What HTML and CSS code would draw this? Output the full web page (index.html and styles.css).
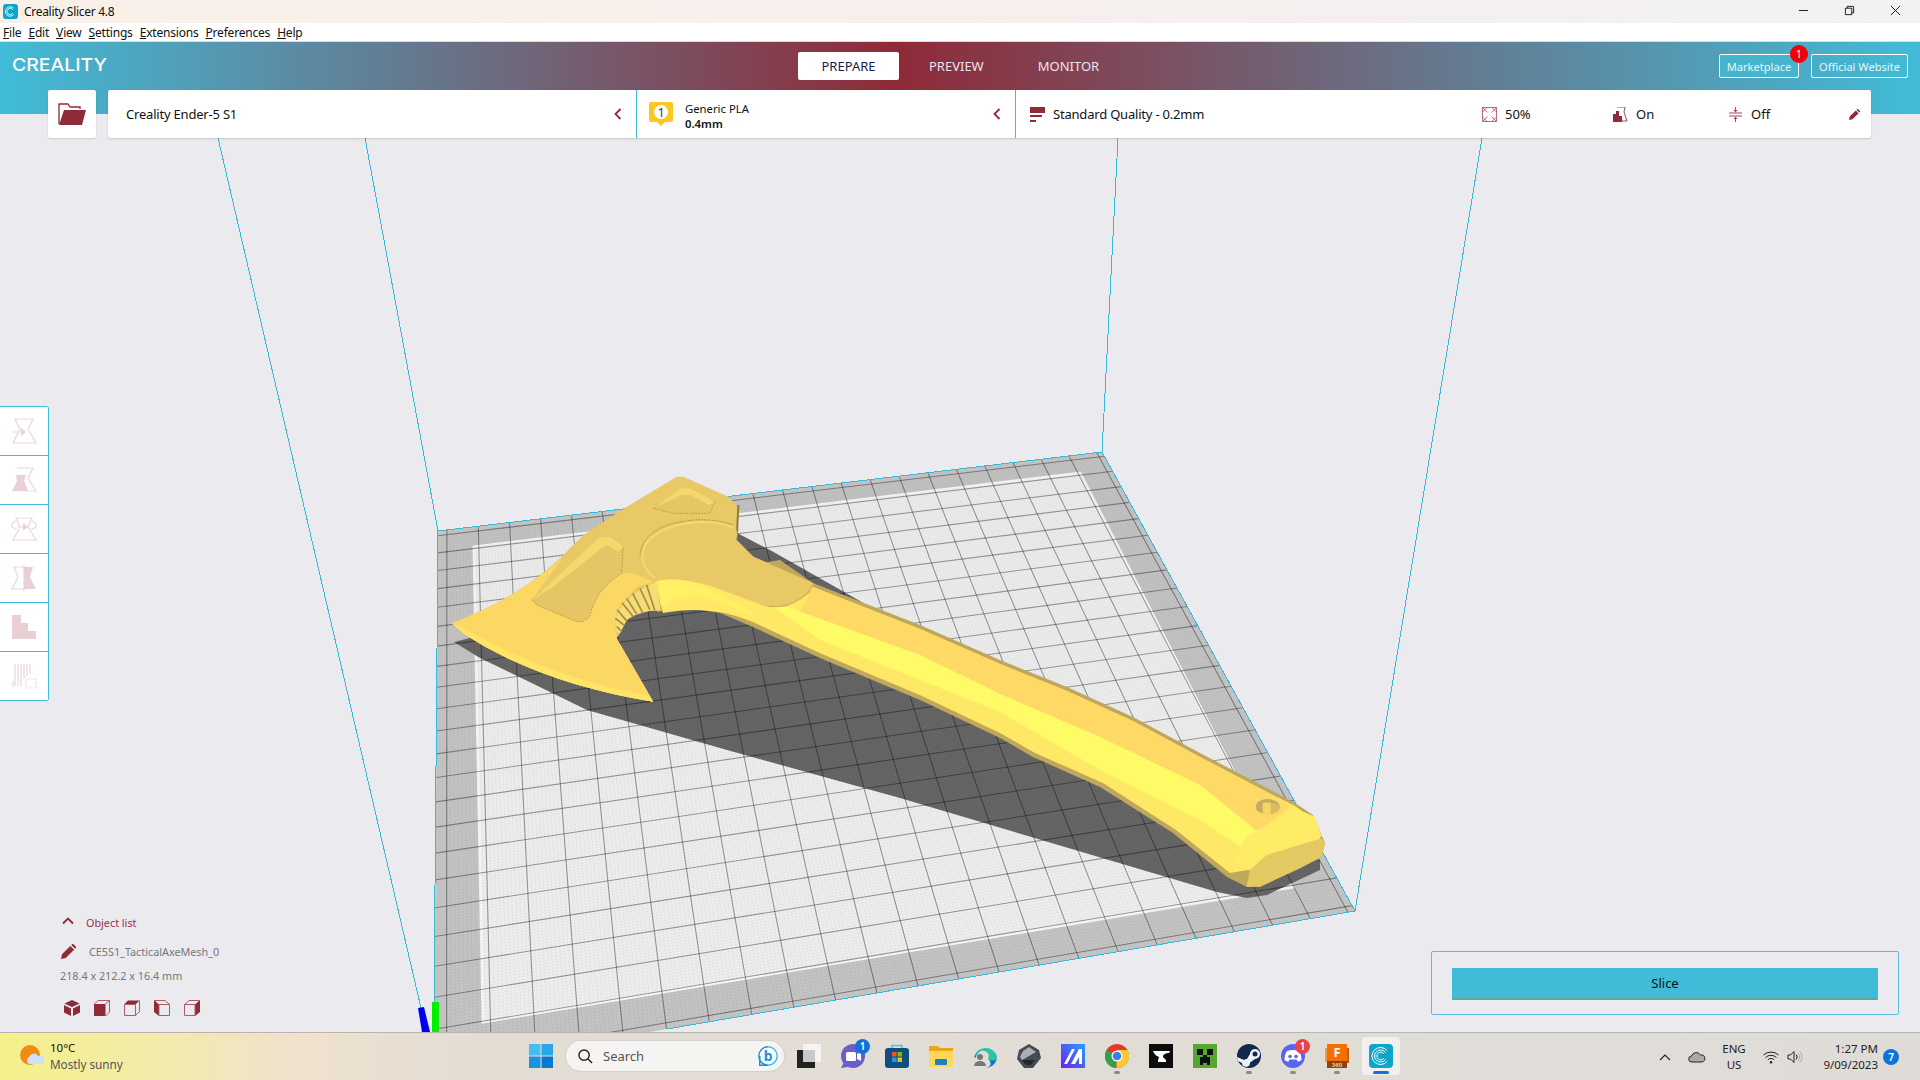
FILE: index.html
```html
<!DOCTYPE html>
<html lang="en">
<head>
<meta charset="utf-8">
<title>Creality Slicer 4.8</title>
<link rel="stylesheet" href="styles.css">
</head>
<body>
<div class="app">
  <div class="titlebar">
    <svg class="app-icon" viewBox="0 0 24 24"><rect width="24" height="24" rx="5" fill="#0fa5c8"/><path d="M17 7a7.500 7.500 0 1 0 0 10" fill="none" stroke="#fff" stroke-width="1.400"/><path d="M15.500 9a5 5 0 1 0 0 6" fill="none" stroke="#fff" stroke-width="1.400"/></svg>
    <span class="title-text">Creality Slicer 4.8</span>
    <div class="win-controls">
      <svg viewBox="0 0 12 12" class="win-btn"><path d="M1 6h10" stroke="#111" fill="none"/></svg>
      <svg viewBox="0 0 12 12" class="win-btn"><path d="M1.500 3.500h7v7h-7zM3.500 3.500v-2h6.500a.5.5 0 0 1 .5.5v6.500h-2" stroke="#111" fill="none"/></svg>
      <svg viewBox="0 0 12 12" class="win-btn"><path d="M1 1l10 10M11 1L1 11" stroke="#111" fill="none"/></svg>
    </div>
  </div>
  <div class="menubar">
    <span><u>F</u>ile</span><span><u>E</u>dit</span><span><u>V</u>iew</span><span><u>S</u>ettings</span><span><u>E</u>xtensions</span><span><u>P</u>references</span><span><u>H</u>elp</span>
  </div>
  <header class="header">
    <div class="logo">CREALITY</div>
    <nav class="tabs">
      <span class="tab tab-active">PREPARE</span>
      <span class="tab">PREVIEW</span>
      <span class="tab">MONITOR</span>
    </nav>
    <div class="links">
      <span class="link link-market">Marketplace<span class="link-badge">1</span></span>
      <span class="link link-site">Official Website</span>
    </div>
  </header>
  <main class="viewport">
    <svg class="scene" viewBox="0 114 1920 918" width="1920" height="918">
      <polygon points="438,531 1102,452 1355,911 434,1069" fill="#c4c4c4"/>
      <polygon points="474,547 1080,473 1293,887 483,1022" fill="#eeeeee" stroke="#f6f6f6" stroke-width="3"/>
      <polygon points="454,642 480,658 587,710 727,750 900,798 1217,892 1247,898 1267,895 1320,870 1320,860 1250,830 853,597 770,550 737,533 620,600" fill="#666666"/>
      <g id="fine"></g>
      <g id="grid"></g>
      <g fill="none" stroke="#36bad8" stroke-width="1" shape-rendering="crispEdges">
        <path d="M438 531L1102 452L1355 911L667 1029"/>
        <path d="M438 531L434 1005"/>
        <path d="M218 138L421 1008"/>
        <path d="M365 138L438 531"/>
        <path d="M1118 138L1102 452"/>
        <path d="M1482 138L1355 911"/>
      </g>
      <polygon points="418,1008 424,1007 430,1032 422,1032" fill="#0000f0"/>
      <rect x="432" y="1002" width="7" height="30" fill="#00f000"/>

      <!-- handle -->
      <polygon fill="#bfa75c" points="813,583 920,625 1000,660 1067,687 1133,717 1200,753 1267,788 1295,803 1313,815 1325,843 1322,857 1300,868 1260,887 1247,887 1227,877 1173,833 1100,787 1033,757 1000,738 920,700 820,658 753,627 720,613 700,610 683,608 657,612 655,580 780,560"/>
      <path fill="#ffe866" d="M655 581C690 572 735 580 770 600L813 587L920 629L1000 664L1067 691L1133 721L1200 757L1267 792L1295 806L1312 818L1322 843L1260 868L1230 873L1176 830L1103 783L1035 753L1002 734L922 696L822 654L755 623C730 612 700 606 663 613Z"/>
      <polygon fill="#ffd966" points="813,587 920,629 1000,664 1067,691 1133,721 1200,757 1267,792 1290,806 1258,832 1200,785 1100,737 1000,694 920,655 800,612"/>
      <polygon fill="#fffb66" points="760,597 920,655 1000,694 1100,737 1200,785 1258,832 1264,862 1200,820 1100,770 1000,712 920,680 820,640"/>

      <!-- head -->
      <g transform="translate(420 450) scale(.33333)">
        <path fill="#e9c866" d="M95 520C210 475 320 420 430 315L490 255L605 180L770 80L790 80L925 140L950 165L955 240L950 270L1000 320L1100 365L1180 400L1170 430L1100 470L1040 470L800 380L710 390L700 480L650 490L620 510L600 550L590 565L700 755C480 720 280 650 130 550Z"/>
        <path fill="#fbd864" d="M95 520C210 475 320 420 430 320L335 450L350 465L470 515L500 510L520 450L560 400L605 370L640 370L700 395L650 410L590 480L585 520L590 565L700 755C480 720 280 650 130 550Z"/>
        <path fill="#ffe566" d="M95 520L130 550C280 650 480 720 700 755L680 735C480 700 300 630 150 545Z"/>
        <path d="M955 165L950 270" stroke="#8c7a40" stroke-width="6" fill="none"/>
        <polygon fill="#e6c564" stroke="#7d6d3c" stroke-width="1.500" stroke-dasharray="5 4" points="700,175 795,115 885,155 870,190 760,190"/>
        <polygon fill="#f6d76c" points="700,175 785,115 810,115 885,155 865,165 810,135 785,135"/>
        <path fill="#e6c564" stroke="#7d6d3c" stroke-width="1.500" stroke-dasharray="5 4" d="M335 450L550 260L610 290L605 370C570 390 530 430 515 480C510 510 490 518 470 515L350 465Z"/>
        <polygon fill="#f6d76c" points="335,450 540,260 570,260 612,290 595,305 560,285 545,295 400,410"/>
        <path d="M700 395C640 350 650 290 690 255C760 200 880 195 945 235C960 250 945 270 950 270L1000 320L1180 400C1170 440 1110 475 1050 470C950 430 800 370 700 395Z" fill="#e9c866"/>
        <path d="M705 385C660 350 655 300 695 262C760 212 870 205 940 232" fill="none" stroke="#f7d86c" stroke-width="6"/>
        <path d="M660 315C665 270 700 235 760 220C820 205 880 205 940 225" fill="none" stroke="#6d5f36" stroke-width="1.500" stroke-dasharray="5 3"/>
        <path d="M1045 468C1100 478 1160 445 1178 405" fill="none" stroke="#d2b45c" stroke-width="4"/>
        <path d="M715 392C800 378 850 405 900 435L1020 500C950 480 880 450 840 440C800 435 760 445 722 470Z" fill="#fff066"/>
        <path d="M590 545C575 490 610 440 710 395L722 482C690 480 650 490 620 510L600 550Z" fill="#f7dc74"/>
        <path d="M590 530L606 545M586 505L612 525M592 480L622 515M606 458L640 500M620 445L650 492M638 430L668 488M660 415L690 480M680 405L704 480" stroke="#a18c4c" stroke-width="5" fill="none"/>
      </g>
      <g transform="translate(1000 440) scale(.33333)">
        <polygon fill="#ffec66" points="740,1190 885,1105 945,1130 965,1190 800,1245 750,1290 700,1260"/>
        <polygon fill="#e4c962" points="750,1290 800,1245 965,1195 975,1210 965,1250 900,1285 780,1340 740,1340"/>
        <ellipse cx="803" cy="1097" rx="42" ry="27" fill="#f8dc70" transform="rotate(-5 803 1097)"/>
        <ellipse cx="803" cy="1100" rx="36" ry="23" fill="#c6ac5c"/>
        <ellipse cx="815" cy="1105" rx="24" ry="15" fill="#d9bd60"/>
        <rect x="788" y="1088" width="24" height="34" fill="#f5d668"/>
      </g>
    </svg>

    <aside class="tools">
      <button class="tool"><svg viewBox="0 0 24 24"><path d="M3 0H21L16 10 24 24H1L8 10Z M0 13h10" class="tool-s"/><path d="M9 9l5 4-5 4Z" class="tool-f"/></svg></button>
      <button class="tool"><svg viewBox="0 0 24 24"><path d="M5 0H21L16 10 24 23H13" class="tool-s"/><path d="M4 7h10l-2 6 4 10H0l5-10Z" class="tool-f"/></svg></button>
      <button class="tool"><svg viewBox="0 0 24 24"><path d="M4 1H20L16 10 24 23H1L8 10Z M4 4C-2 6-1 12 5 12M20 4c6 2 5 8-1 8M5 10h7" class="tool-s"/><path d="M11 6l5 4-5 4Z" class="tool-f"/></svg></button>
      <button class="tool"><svg viewBox="0 0 24 24"><path d="M2 1h10v22H0l6-12Z M12 -1v26" class="tool-s"/><path d="M12 1h9l-3 10 6 12H12Z" class="tool-f"/></svg></button>
      <button class="tool"><svg viewBox="0 0 24 24"><path d="M0 0h9v8h7v8h8v8H0Z" class="tool-f"/></svg></button>
      <button class="tool"><svg viewBox="0 0 24 24"><path d="M3 0v22M6 0v22M9 0v22M12 0v14M15 0v12M18 0v10M1 23v-6" class="tool-s"/><path d="M14 15h10v9H14Z" class="tool-d"/></svg></button>
    </aside>

    <section class="objects">
      <div class="obj-head">
        <svg viewBox="0 0 12 8" class="obj-chev"><path d="M1 6.500L6 1.500l5 5" fill="none" stroke="#8f2a38" stroke-width="1.800"/></svg>
        <span>Object list</span>
      </div>
      <div class="obj-name">
        <svg viewBox="0 0 16 16" class="obj-pencil"><path d="M0 16l1-5L10 2l4 4-9 9Zm11-15 1-1h1l3 3v1l-1 1Z" fill="#8f2a38"/></svg>
        <span>CE5S1_TacticalAxeMesh_0</span>
      </div>
      <div class="obj-size">218.4 x 212.2 x 16.4 mm</div>
      <div class="obj-views">
        <svg viewBox="0 0 16 16"><path d="M8 0l7.500 3.500L8 7 .5 3.500ZM0 5l7 3.500V16L0 12.500ZM16 5 9 8.500V16l7-3.500Z" fill="#8f2a38"/></svg>
        <svg viewBox="0 0 16 16"><path d="M0 4h11.500v12H0Z" fill="#8f2a38"/><path d="M.5 4L4 .5h11.500v11.500l-4 4M11.500 4L15.500.5" class="cube-s"/></svg>
        <svg viewBox="0 0 16 16"><path d="M0 4.500L4 .5h11.500L11.500 4.500Z" fill="#8f2a38"/><path d="M.5 4.500h11v11H.5ZM11.500 15.500l4-4V.5" class="cube-s"/></svg>
        <svg viewBox="0 0 16 16"><path d="M0 0l5 4.500V16L0 12Z" fill="#8f2a38"/><path d="M5 4.500h10.500v11H5ZM.5.5H11l4.500 4" class="cube-s"/></svg>
        <svg viewBox="0 0 16 16"><path d="M16 0l-5 4.500V16l5-4Z" fill="#8f2a38"/><path d="M.5 4.500h10.500v11H.5ZM.5 4.500L5 .5h11" class="cube-s"/></svg>
      </div>
    </section>

    <section class="slice-panel"><button class="slice-btn">Slice</button></section>
  </main>

  <div class="topbar">
    <button class="open-btn">
      <svg viewBox="0 0 28 22" class="open-icon"><path d="M1 21V1h9l2 3h10v2" fill="none" stroke="#8f2a38" stroke-width="1.300"/><path d="M6 7h22l-4 15H1Z" fill="#8f2a38"/></svg>
    </button>
    <div class="bar">
      <div class="cell cell-printer">
        <span>Creality Ender-5 S1</span>
        <svg viewBox="0 0 8 12" class="chev"><path d="M6.500 1L1.500 6l5 5" fill="none" stroke="#8f2a38" stroke-width="1.800"/></svg>
      </div>
      <div class="cell cell-material">
        <svg viewBox="0 0 24 24" class="pin"><path d="M2 0h20a2 2 0 0 1 2 2v16a2 2 0 0 1-2 2h-6l-4 4-4-4H2a2 2 0 0 1-2-2V2a2 2 0 0 1 2-2Z" fill="#fdc720"/><circle cx="12" cy="10" r="7" fill="#fff"/><text x="12" y="14.500" text-anchor="middle" class="pin-num">1</text></svg>
        <div class="mat-text"><span>Generic PLA</span><strong>0.4mm</strong></div>
        <svg viewBox="0 0 8 12" class="chev"><path d="M6.500 1L1.500 6l5 5" fill="none" stroke="#8f2a38" stroke-width="1.800"/></svg>
      </div>
      <div class="cell cell-quality">
        <svg viewBox="0 0 15 15" class="opt-icon"><path d="M0 0h15v6H0Z" fill="#8f2a38"/><path d="M0 8h12v2H0ZM0 13h6v2H0Z" fill="#8f2a38"/></svg>
        <span>Standard Quality - 0.2mm</span>
        <div class="opts">
          <div class="opt opt-infill"><svg viewBox="0 0 15 15" class="opt-icon"><path d="M.5.5h14v14H.5ZM.5 5L5 .5M10 .5L14.500 5M14.500 10L10 14.500M5 14.500L.5 10M.5 .5l14 14M14.500 .5l-14 14" fill="none" stroke="#b04a5a" stroke-width=".8"/><path d="M7.500 3.500l4 4-4 4-4-4Z" fill="#fff"/></svg><span>50%</span></div>
          <div class="opt opt-support"><svg viewBox="0 0 15 15" class="opt-icon"><path d="M4 0h8l-1 5 3 9H6" fill="none" stroke="#b04a5a"/><path d="M0 15V7h3V4h3v5h3v6Z" fill="#8f2a38"/></svg><span>On</span></div>
          <div class="opt opt-adhesion"><svg viewBox="0 0 15 15" class="opt-icon"><path d="M1 6h13M1 9h13M7.500 0v4M7.500 11v4" stroke="#a84556" fill="none"/><path d="M5.500 3h4l-2 2.500ZM5.500 12h4l-2-2.500Z" fill="#a84556"/></svg><span>Off</span></div>
          <svg viewBox="0 0 16 16" class="bar-pencil"><path d="M0 16l1-5L10 2l4 4-9 9Zm11-15 1-1h1l3 3v1l-1 1Z" fill="#8f2a38"/></svg>
        </div>
      </div>
    </div>
  </div>

  <footer class="taskbar">
    <div class="weather">
      <svg viewBox="0 0 24 24" class="weather-icon"><circle cx="10" cy="11" r="10" fill="#f08c14"/><path d="M9 20a4 4 0 0 1 0-7 5 5 0 0 1 9-1 4 4 0 0 1 4 8Z" fill="#cfe0f5"/></svg>
      <div class="weather-text"><span class="temp">10°C</span><span class="cond">Mostly sunny</span></div>
    </div>
    <div class="tb-center">
      <svg viewBox="0 0 24 24" class="tb"><path d="M0 0h11.500v11.500H0Z" fill="#45bdf5"/><path d="M12.500 0H24v11.500H12.500Z" fill="#2aa5ea"/><path d="M0 12.500h11.500V24H0Z" fill="#1a92e0"/><path d="M12.500 12.500H24V24H12.500Z" fill="#0878d0"/></svg>
      <div class="search">
        <svg viewBox="0 0 16 16" class="search-icon"><circle cx="6.500" cy="6.500" r="5.500" fill="none" stroke="#222" stroke-width="1.500"/><path d="M10.500 10.500L15 15" stroke="#222" stroke-width="1.500"/></svg>
        <span>Search</span>
        <svg viewBox="0 0 24 24" class="bing"><path d="M12 2a10 10 0 1 0 0 20H3v-10" fill="#fff" stroke="#1b8fe8" stroke-width="1.600"/><path d="M12 2a10 10 0 0 1 0 20" fill="#fff" stroke="#38bdf0" stroke-width="1.600"/><text x="12" y="17" text-anchor="middle" class="bing-b">b</text></svg>
      </div>
      <svg viewBox="0 0 24 24" class="tb"><rect x="6" y="0" width="18" height="18" rx="1" fill="#f4f4f4"/><rect x="0" y="6" width="18" height="18" fill="#222"/><rect x="6" y="6" width="12" height="12" fill="#c8c8c8"/></svg>
      <div class="tb tb-wrap">
        <svg viewBox="0 0 24 24"><circle cx="12" cy="12" r="12" fill="#6a5fc8"/><path d="M0 24l3-6 4 5Z" fill="#6a5fc8"/><rect x="5" y="8" width="10" height="9" rx="1.500" fill="#fff"/><path d="M16 10l4-2v9l-4-2Z" fill="#fff"/></svg>
        <span class="tb-badge tb-badge-blue">1</span>
      </div>
      <svg viewBox="0 0 24 24" class="tb"><path d="M7 5V1.500h10V5" fill="none" stroke="#3cc8e8" stroke-width="1.500"/><rect y="4" width="24" height="20" rx="3" fill="#0f4f80"/><rect x="7" y="8" width="4.500" height="4.500" fill="#f25022"/><rect x="12.500" y="8" width="4.500" height="4.500" fill="#7fba00"/><rect x="7" y="13.500" width="4.500" height="4.500" fill="#00a4ef"/><rect x="12.500" y="13.500" width="4.500" height="4.500" fill="#ffb900"/></svg>
      <svg viewBox="0 0 24 24" class="tb"><path d="M0 2h9l2 2h13v19H0Z" fill="#e8a818"/><path d="M0 7h24v16H0Z" fill="#ffd75a"/><rect x="6" y="15" width="12" height="6" rx="1" fill="#1a7fc8"/></svg>
      <svg viewBox="0 0 24 24" class="tb"><path d="M1 13A12 12 0 0 1 24 12C24 17 18 17 15 15C18 9 12 6 8 7C4 8 2 10 1 13Z" fill="#2fc4a0"/><path d="M24 12C24 20 18 24 12 24C15 24 21 21 15 15C18 17 24 17 24 12Z" fill="#1478c8"/><path d="M1 13C2 10 4 8 8 7C4 9 3 12 3 14Z" fill="#1b8fd8"/><circle cx="7" cy="13" r="3" fill="#777"/><path d="M1 22a6 5 0 0 1 12 0Z" fill="#777"/></svg>
      <svg viewBox="0 0 24 24" class="tb"><path d="M12 0l10 6 2 8-8 10H7L0 15l2-9Z" fill="#454b52"/><path d="M12 3l7 5-14 8-2-3 3-6Z" fill="#a8aeb4"/><path d="M5 16h13l-4 5H9Z" fill="#24282c"/></svg>
      <svg viewBox="0 0 24 24" class="tb"><defs><linearGradient id="ma" x1="0" y1="1" x2="1" y2="0"><stop offset="0" stop-color="#6a22f0"/><stop offset="1" stop-color="#28a0f8"/></linearGradient></defs><rect width="24" height="24" fill="url(#ma)"/><path d="M3 20L11 5h3L6 20ZM10 20L18 5h3v15h-3v-7l-4 7Z" fill="#fff"/></svg>
      <div class="tb tb-wrap run">
        <svg viewBox="0 0 24 24"><circle cx="12" cy="12" r="12" fill="#e03a2e"/><path d="M12 24A12 12 0 0 1 1.600 6L12 12l-1 12Z" fill="#30a04c"/><path d="M12 24a12 12 0 0 0 10.400-18H12l-.5 18Z" fill="#fcc92e"/><circle cx="12" cy="12" r="5.500" fill="#fff"/><circle cx="12" cy="12" r="4.300" fill="#3d7fe8"/></svg>
      </div>
      <svg viewBox="0 0 24 24" class="tb"><rect width="24" height="24" fill="#0c0c0c"/><path d="M4 7h17l-1 2c-3 0-6 1-6 4l3 3v2H9v-2l1-3C8 12 6 11 5 9Z" fill="#fff"/></svg>
      <svg viewBox="0 0 24 24" class="tb"><rect width="24" height="24" fill="#56a632"/><path d="M4 5h6v6H4ZM14 5h6v6h-6ZM10 11h4v2h3v8h-3v-2h-4v2H7v-8h3Z" fill="#111"/></svg>
      <div class="tb tb-wrap run">
        <svg viewBox="0 0 24 24"><circle cx="12" cy="12" r="12" fill="#12294e"/><path d="M0 13l7 3a4 4 0 0 1 3-1l3-5a5 5 0 1 1 5 5l-5 3.500a4 4 0 0 1-8 .5L1 17Z" fill="#f0f4f8"/><circle cx="18" cy="10" r="2.500" fill="#12294e"/></svg>
      </div>
      <div class="tb tb-wrap run">
        <svg viewBox="0 0 24 24"><circle cx="12" cy="12" r="12" fill="#5865f2"/><path d="M6 7c4-1.500 8-1.500 12 0 2 3 2.500 6 2.500 9-1.500 1-3 1.500-4 1.500l-1-2h-7l-1 2c-1 0-2.500-.5-4-1.500C3.500 13 4 10 6 7Z" fill="#fff"/><circle cx="9" cy="12.500" r="1.800" fill="#5865f2"/><circle cx="15" cy="12.500" r="1.800" fill="#5865f2"/></svg>
        <span class="tb-badge tb-badge-red">1</span>
      </div>
      <div class="tb tb-wrap run">
        <svg viewBox="0 0 24 24"><rect x="0" y="4" width="4" height="14" fill="#f59a4a"/><rect x="20" y="4" width="4" height="15" fill="#c65e10"/><rect x="2" y="0" width="20" height="18" rx="1" fill="#f56f00"/><rect x="2" y="17" width="20" height="7" fill="#8f4010"/><text x="12" y="13" text-anchor="middle" class="f-letter">F</text><text x="12" y="23" text-anchor="middle" class="f-num">360</text></svg>
      </div>
      <div class="tb tb-wrap tb-active">
        <svg viewBox="0 0 24 24"><rect width="24" height="24" rx="4" fill="#0fa5c8"/><path d="M18 6.500a8.500 8.500 0 1 0 0 11" fill="none" stroke="#fff" stroke-width="1"/><path d="M16.500 8.500a6 6 0 1 0 0 7" fill="none" stroke="#fff" stroke-width="1"/><path d="M15 10a3.800 3.800 0 1 0 0 4" fill="none" stroke="#fff" stroke-width="1"/></svg>
      </div>
    </div>
    <div class="tray">
      <svg viewBox="0 0 12 8" class="tray-chev"><path d="M1 7l5-5 5 5" fill="none" stroke="#222" stroke-width="1.200"/></svg>
      <svg viewBox="0 0 18 12" class="tray-cloud"><path d="M4 11a3 3 0 0 1-.5-6 5 5 0 0 1 9-1 3.500 3.500 0 0 1 1.500 7Z" fill="#aaa" stroke="#222"/></svg>
      <div class="tray-lang"><span>ENG</span><span>US</span></div>
      <svg viewBox="0 0 16 14" class="tray-wifi"><path d="M.5 5a11 11 0 0 1 15 0M2.500 7.500a8 8 0 0 1 11 0M4.800 9.800a4.500 4.500 0 0 1 6.400 0" fill="none" stroke="#222"/><circle cx="8" cy="12.300" r="1.200" fill="#222"/></svg>
      <svg viewBox="0 0 16 14" class="tray-vol"><path d="M1 5h2.500L7 1.500v11L3.500 9H1Z" fill="none" stroke="#222"/><path d="M9 4.500a3.500 3.500 0 0 1 0 5" fill="none" stroke="#222"/><path d="M11 3a6 6 0 0 1 0 8M13 1.500a8.500 8.500 0 0 1 0 11" fill="none" stroke="#aaa"/></svg>
      <div class="tray-clock"><span>1:27 PM</span><span>9/09/2023</span></div>
      <span class="tray-badge">7</span>
    </div>
  </footer>
</div>
<script src="grid.js"></script>
</body>
</html>
```
FILE: styles.css
```css
* { box-sizing: border-box; }
html, body { margin: 0; padding: 0; }
body { width: 1920px; height: 1080px; overflow: hidden; font-family: "Noto Sans", "Open Sans", sans-serif; color: #111; }
.app { position: relative; width: 1920px; height: 1080px; display: flex; flex-direction: column; background: #eaeaef; }

.titlebar { height: 23px; flex: none; display: flex; align-items: center; padding-left: 3px; background: linear-gradient(90deg, #f9f0e8 0%, #f6efec 50%, #f3f1f3 100%); }
.app-icon { width: 15px; height: 15px; }
.title-text { margin-left: 6px; font-size: 12px; letter-spacing: -.3px; }
.win-controls { margin-left: auto; display: flex; padding-right: 19px; gap: 35px; }
.win-btn { width: 11px; height: 11px; display: block; margin-top: -3px; }

.menubar { height: 19px; flex: none; display: flex; gap: 7px; align-items: center; padding-left: 3px; background: #fff; border-bottom: 1px solid #dcdcdc; font-size: 12px; letter-spacing: -.2px; }

.header { height: 72px; flex: none; position: relative; background: linear-gradient(90deg, #41bcd8 0%, #8f2a38 46.700%, #41bcd8 100%); }
.logo { position: absolute; left: 12px; top: 13px; font-family: Inter, sans-serif; font-size: 17px; font-weight: 500; color: #fff; transform: scaleX(1.14); transform-origin: left center; }
.tabs { position: absolute; left: 798px; top: 10px; display: flex; align-items: center; height: 28px; font-size: 13px; color: #ebe3f2; }
.tab { height: 28px; line-height: 28px; padding: 0 24px 0 30px; }
.tab-active { width: 101px; padding: 0; text-align: center; background: #fff; border-radius: 2px; color: #1a1a50; }
.links { position: absolute; right: 12px; top: 12px; display: flex; gap: 12px; }
.link { height: 24px; line-height: 23px; border: 1px solid #fff; border-radius: 2px; font-size: 11.100px; text-align: center; color: #e4f6fb; }
.link-market { position: relative; width: 80px; background: #45b4cf; }
.link-site { width: 97px; }
.link-badge { position: absolute; right: -10px; top: -10px; width: 18px; height: 18px; line-height: 18px; border-radius: 50%; background: #f40008; color: #fff; font-size: 11px; text-align: center; }

.viewport { flex: 1; position: relative; overflow: hidden; background: #eaeaef; }
.scene { display: block; }

.tools { position: absolute; left: 0; top: 292px; width: 49px; background: #fff; border: 1.500px solid #41bcd8; border-left: 0; border-radius: 0 3px 3px 0; display: flex; flex-direction: column; }
.tool { height: 49px; padding: 0; border: 0; border-bottom: 1.500px solid #41bcd8; background: #fff; display: flex; align-items: center; justify-content: center; }
.tool:last-child { border-bottom: 0; height: 48px; }
.tool svg { width: 24px; height: 24px; overflow: visible; }
.tool-s { fill: none; stroke: #ecd6da; stroke-width: 1.200; }
.tool-f { fill: #e8d0d5; stroke: none; }
.tool-d { fill: none; stroke: #ecd6da; stroke-width: 1.200; stroke-dasharray: 1.500 1; }

.objects { position: absolute; left: 60px; bottom: 16px; display: flex; flex-direction: column; font-size: 10.800px; color: #777; }
.obj-head { display: flex; align-items: center; color: #96304e; height: 18px; }
.obj-chev { width: 12px; height: 8px; margin: 0 12px 2px 2px; }
.obj-name { display: flex; align-items: center; height: 18px; margin-top: 11px; }
.obj-pencil { width: 15px; height: 15px; margin: 0 13px 0 1px; }
.obj-size { height: 16px; line-height: 16px; margin-top: 8px; }
.obj-views { display: flex; gap: 14px; margin-top: 16px; padding-left: 4px; }
.obj-views svg { width: 16px; height: 16px; }
.cube-s { fill: none; stroke: #b05a68; stroke-width: 1; }

.slice-panel { position: absolute; left: 1431px; bottom: 17px; width: 468px; height: 64px; border: 1px solid #55bfd8; border-radius: 2px; padding: 16px 20px; }
.slice-btn { display: block; width: 426px; height: 32px; padding: 0; border: 0; border-bottom: 2px solid #5aa89a; border-radius: 1px; background: #41bcd8; font: 13px "Noto Sans", sans-serif; color: #111; }

.topbar { position: absolute; left: 48px; top: 90px; display: flex; gap: 12px; height: 48px; }
.open-btn { width: 48px; height: 48px; padding: 0; border: 0; border-radius: 2px; background: #fff; box-shadow: 0 1px 2px rgba(0,0,0,.12); display: flex; align-items: center; justify-content: center; }
.open-icon { width: 28px; height: 22px; }
.bar { width: 1763px; height: 48px; display: flex; background: #fff; border-radius: 2px; box-shadow: 0 1px 2px rgba(0,0,0,.15); font-size: 13px; letter-spacing: -.2px; }
.cell { display: flex; align-items: center; height: 48px; }
.cell-printer { width: 528px; padding: 0 14px 0 18px; justify-content: space-between; }
.cell-material { width: 379px; padding: 0 14px 0 12px; border-left: 1px solid #41bcd8; }
.chev { width: 8px; height: 12px; margin-left: auto; }
.pin { width: 24px; height: 24px; flex: none; }
.pin-num { font: 12px "Noto Sans", sans-serif; fill: #333; }
.mat-text { display: flex; flex-direction: column; margin: 4px 0 0 12px; font-size: 11.300px; line-height: 15px; letter-spacing: 0; }
.mat-text strong { font-weight: 600; }
.cell-quality { flex: 1; padding-left: 14px; border-left: 1px solid #41bcd8; }
.cell-quality > span { margin-left: 8px; }
.opt-icon { width: 15px; height: 15px; flex: none; }
.opts { margin-left: auto; display: flex; align-items: center; padding-right: 11px; letter-spacing: 0; }
.opt { display: flex; align-items: center; gap: 8px; }
.opt-infill { width: 131px; }
.opt-support { width: 115px; }
.opt-adhesion { width: 121px; }
.bar-pencil { width: 11px; height: 11px; }

.taskbar { height: 48px; flex: none; position: relative; display: flex; align-items: center; padding-bottom: 1px; border-top: 1px solid #b8b5b0; background: linear-gradient(90deg, #f5f08a 0%, #f3eda0 6%, #f1e2cc 15%, #e3ddd4 24%, #dfdcd8 100%); }
.weather { width: 529px; flex: none; display: flex; align-items: center; padding-left: 20px; }
.weather-icon { width: 24px; height: 24px; }
.weather-text { margin-left: 6px; display: flex; flex-direction: column; font-size: 11.700px; line-height: 16px; }
.temp { color: #111; font-size: 11.500px; }
.cond { color: #555; }
.tb-center { display: flex; align-items: center; gap: 20px; }
.tb { width: 24px; height: 24px; display: block; flex: none; }
.tb-wrap { position: relative; }
.tb-wrap > svg { width: 24px; height: 24px; display: block; position: relative; }
.tb-badge { position: absolute; right: -5px; top: -5px; width: 15px; height: 15px; line-height: 15px; border-radius: 50%; font-size: 10px; font-weight: 600; color: #fff; text-align: center; }
.tb-badge-blue { background: #0f72d8; }
.tb-badge-red { background: #e8454a; }
.run::after { content: ""; position: absolute; left: 9px; bottom: -6px; width: 6px; height: 3px; border-radius: 2px; background: #8a8a8a; }
.tb-active::before { content: ""; position: absolute; left: -7px; top: -7px; width: 38px; height: 38px; border-radius: 4px; background: #f1f0ef; }
.tb-active::after { content: ""; position: absolute; left: 4px; bottom: -6px; width: 16px; height: 3px; border-radius: 2px; background: #0f72d8; }
.search { width: 218px; height: 30px; margin: 0 -7px; flex: none; display: flex; align-items: center; padding: 0 5px 0 12px; border-radius: 15px; background: #f5f4f3; box-shadow: 0 0 0 1px #d4d1cd; font-size: 13px; color: #555; }
.search-icon { width: 15px; height: 15px; }
.search > span { margin-left: 10px; }
.bing { width: 22px; height: 22px; margin-left: auto; }
.bing-b { font: 700 15px "Noto Sans", sans-serif; fill: #1b8fe8; }
.f-letter { font: 700 13px "Noto Sans", sans-serif; fill: #fff; }
.f-num { font: 700 6px "Noto Sans", sans-serif; fill: #e8c8a0; }
.tray { position: absolute; left: 1659px; right: 0; top: 0; height: 47px; display: flex; align-items: center; font-size: 11.500px; color: #222; }
.tray-chev { width: 12px; height: 8px; }
.tray-cloud { width: 18px; height: 12px; margin-left: 17px; }
.tray-lang { width: 26px; margin-left: 15px; display: flex; flex-direction: column; align-items: center; line-height: 16px; }
.tray-wifi { width: 16px; height: 14px; margin-left: 16px; }
.tray-vol { width: 16px; height: 14px; margin-left: 8px; }
.tray-clock { width: 75px; display: flex; flex-direction: column; align-items: flex-end; line-height: 16px; }
.tray-badge { width: 16px; height: 16px; margin-left: 5px; line-height: 16px; border-radius: 50%; background: #0f72d8; color: #fff; font-size: 10px; font-weight: 600; text-align: center; }
```
FILE: grid.js
```js
(function () {
  var Q = [[438, 531], [1102, 452], [1355, 911], [434, 1069]];
  function homography(p) {
    var dx1 = p[1][0] - p[2][0], dx2 = p[3][0] - p[2][0], sx = p[0][0] - p[1][0] + p[2][0] - p[3][0];
    var dy1 = p[1][1] - p[2][1], dy2 = p[3][1] - p[2][1], sy = p[0][1] - p[1][1] + p[2][1] - p[3][1];
    var d = dx1 * dy2 - dx2 * dy1;
    var g = (sx * dy2 - dx2 * sy) / d, h = (dx1 * sy - sx * dy1) / d;
    var a = p[1][0] - p[0][0] + g * p[1][0], b = p[3][0] - p[0][0] + h * p[3][0];
    var e = p[1][1] - p[0][1] + g * p[1][1], f = p[3][1] - p[0][1] + h * p[3][1];
    return function (u, v) {
      var w = g * u + h * v + 1;
      return [(a * u + b * v + p[0][0]) / w, (e * u + f * v + p[0][1]) / w];
    };
  }
  var H = homography(Q);
  var NS = "http://www.w3.org/2000/svg";
  function line(parent, a, b, cls) {
    var l = document.createElementNS(NS, "line");
    l.setAttribute("x1", a[0].toFixed(1)); l.setAttribute("y1", a[1].toFixed(1));
    l.setAttribute("x2", b[0].toFixed(1)); l.setAttribute("y2", b[1].toFixed(1));
    l.setAttribute("stroke", cls.c); l.setAttribute("stroke-width", cls.w);
    parent.appendChild(l);
  }
  var step = 0.0445, off = 0.0125;
  var major = { c: "rgba(0,0,0,.36)", w: 1.1 }, minor = { c: "rgba(0,0,0,.03)", w: 1 };
  var fine = document.getElementById("fine"), grid = document.getElementById("grid");
  for (var i = 0; i <= 220; i++) {
    var t = off + i * step / 10;
    if (t > 1) break;
    line(fine, H(t, 0), H(t, 1), minor);
    line(fine, H(0, t), H(1, t), minor);
  }
  for (var j = 0; j <= 22; j++) {
    var s = off + j * step;
    line(grid, H(s, 0), H(s, 1), major);
    line(grid, H(0, s), H(1, s), major);
  }
})();
```
